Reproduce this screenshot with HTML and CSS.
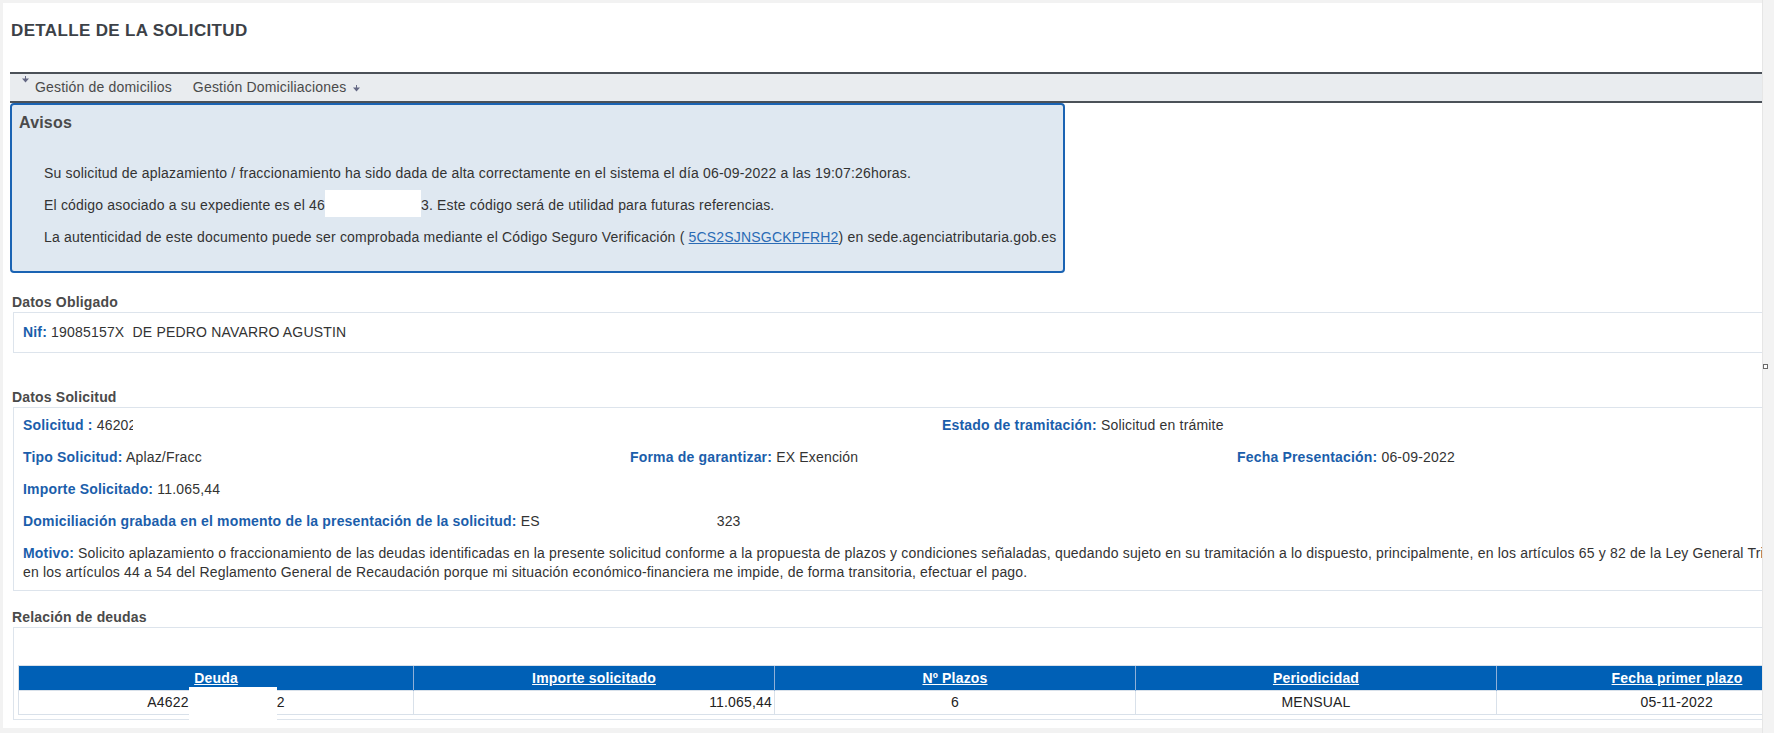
FILE: index.html
```html
<!DOCTYPE html>
<html lang="es">
  <head>
    <meta charset="UTF-8" />
    <meta name="viewport" content="width=device-width, initial-scale=1.0" />
    <title>Detalle de la solicitud</title>
    <link rel="stylesheet" href="styles.css">
  </head>
  <body>
    <div class="frame">
      <div class="viewport">
        <div class="page">
          <h1 class="page-title">DETALLE DE LA SOLICITUD</h1>

          <nav class="menu">
            <a class="menu-item">
              <svg class="menu-arrow menu-arrow--up" width="7" height="7" viewBox="0 0 7 7">
                <path d="M3 0h1v2.5H3z M0 2.5h7L3.5 6.5z" />
              </svg>
              Gestión de domicilios
            </a>
            <a class="menu-item">
              Gestión Domiciliaciones
              <svg class="menu-arrow menu-arrow--down" width="7" height="7" viewBox="0 0 7 7">
                <path d="M3 0h1v2.5H3z M0 2.5h7L3.5 6.5z" />
              </svg>
            </a>
          </nav>

          <div class="avisos">
            <h2>Avisos</h2>
            <div class="avisos-body">
              <p>Su solicitud de aplazamiento / fraccionamiento ha sido dada de alta correctamente en el sistema el día 06-09-2022 a las 19:07:26horas.</p>
              <p>El código asociado a su expediente es el 46<span class="redact"></span>3. Este código será de utilidad para futuras referencias.</p>
              <p>La autenticidad de este documento puede ser comprobada mediante el Código Seguro Verificación ( <a class="link" href="#">5CS2SJNSGCKPFRH2</a>) en sede.agenciatributaria.gob.es</p>
            </div>
          </div>

          <h3 class="section-title section-title--first">Datos Obligado</h3>
          <div class="panel">
            <span class="label">Nif:</span> 19085157X&nbsp; DE PEDRO NAVARRO AGUSTIN
          </div>

          <h3 class="section-title section-title--far">Datos Solicitud</h3>
          <div class="panel panel--solicitud">
            <div class="row">
              <div class="cell cell--half"><span class="label">Solicitud :</span> 4620<span class="cut">2</span></div>
              <div class="cell"><span class="label">Estado de tramitación:</span> Solicitud en trámite</div>
            </div>
            <div class="row">
              <div class="cell cell--third"><span class="label">Tipo Solicitud:</span> Aplaz/Fracc</div>
              <div class="cell cell--third"><span class="label">Forma de garantizar:</span> EX Exención</div>
              <div class="cell"><span class="label">Fecha Presentación:</span> 06-09-2022</div>
            </div>
            <div class="row">
              <div class="cell"><span class="label">Importe Solicitado:</span> 11.065,44</div>
            </div>
            <div class="row">
              <div class="cell"><span class="label">Domiciliación grabada en el momento de la presentación de la solicitud:</span> ES<span class="gap"></span>323</div>
            </div>
            <div class="row">
              <div class="cell"><span class="label">Motivo:</span> Solicito aplazamiento o fraccionamiento de las deudas identificadas en la presente solicitud conforme a la propuesta de plazos y condiciones señaladas, quedando sujeto en su tramitación a lo dispuesto, principalmente, en los artículos 65 y 82 de la Ley General Tributaria, y<br>en los artículos 44 a 54 del Reglamento General de Recaudación porque mi situación económico-financiera me impide, de forma transitoria, efectuar el pago.</div>
            </div>
          </div>

          <h3 class="section-title section-title--near">Relación de deudas</h3>
          <div class="panel panel--deudas">
            <table class="deudas">
              <thead>
                <tr>
                  <th class="col-deuda"><a href="#">Deuda</a></th>
                  <th><a href="#">Importe solicitado</a></th>
                  <th><a href="#">Nº Plazos</a></th>
                  <th><a href="#">Periodicidad</a></th>
                  <th><a href="#">Fecha primer plazo</a></th>
                </tr>
              </thead>
              <tbody>
                <tr>
                  <td>A4622<span class="redact-cell"></span>2</td>
                  <td class="num">11.065,44</td>
                  <td>6</td>
                  <td>MENSUAL</td>
                  <td>05-11-2022</td>
                </tr>
              </tbody>
            </table>
          </div>
        </div>
      </div>
      <div class="gutter"><span class="grip"></span></div>
    </div>
  </body>
</html>
```

FILE: styles.css
```css
body {
  margin: 0;
  height: 733px;
  overflow: hidden;
  background: #f2f2f2;
  font-family: "Liberation Sans", Arial, sans-serif;
  font-size: 14px;
  letter-spacing: 0.18px;
  color: #333;
}
.frame {
  display: flex;
  height: 733px;
  padding: 3px 0 0 3px;
  box-sizing: border-box;
}
.viewport {
  flex-shrink: 0;
  width: 1759px;
  height: 725px;
  overflow: hidden;
  background: #fff;
}
.page {
  width: 1900px;
  padding-left: 7px;
}
.gutter {
  flex: 1;
  margin-top: -3px;
  background: #f3f3f3;
  border-left: 1px solid #e6e6e6;
}
.grip {
  display: block;
  width: 3px;
  height: 3px;
  margin: 364px 0 0 0;
  border: 1px solid #6a6a6a;
  background: #fff;
}

.page-title {
  margin: 0;
  padding: 18px 0 31px 1px;
  font-size: 17px;
  line-height: 20px;
  font-weight: 700;
  letter-spacing: 0.35px;
  color: #3c4147;
}

.menu {
  display: flex;
  gap: 21px;
  height: 27px;
  padding-left: 12px;
  border-top: 2px solid #4b5158;
  border-bottom: 2px solid #4b5158;
  background: #e9ecef;
  line-height: 27px;
}
.menu-item {
  display: flex;
  gap: 6px;
  color: #4a4a4a;
  text-decoration: none;
}
.menu-arrow {
  fill: #646884;
  flex-shrink: 0;
}
.menu-arrow--up {
  margin-top: 2px;
}
.menu-arrow--down {
  margin-top: 11px;
  margin-left: 1px;
}

.avisos {
  width: 1055px;
  box-sizing: border-box;
  padding: 8px 7px 18px;
  border: 2px solid #1a63b3;
  border-radius: 4px;
  background: #dfe8f1;
}
.avisos h2 {
  margin: 0;
  font-size: 16px;
  line-height: 20px;
  color: #4a4a4a;
}
.avisos-body {
  margin-top: 24px;
  padding-left: 25px;
}
.avisos-body p {
  margin: 0;
  line-height: 32px;
  white-space: nowrap;
}
.redact {
  display: inline-block;
  width: 96px;
  height: 27px;
  vertical-align: -7px;
  background: #fff;
}
.link {
  color: #2a6bb5;
}

.section-title {
  margin: 21px 0 1px 2px;
  font-size: 14px;
  line-height: 17px;
  color: #4a4a4a;
}
.section-title--far {
  margin-top: 36px;
}
.section-title--near {
  margin-top: 18px;
}

.panel {
  margin-left: 3px;
  padding: 10px 9px;
  border: 1px solid #dde4ec;
  line-height: 19px;
}
.label {
  font-weight: 700;
  color: #1b5eab;
}

.panel--solicitud {
  padding: 8px 9px;
}
.row {
  display: flex;
}
.row + .row {
  margin-top: 13px;
}
.cell--half {
  width: 919px;
}
.cell--third {
  width: 607px;
}
.cut {
  display: inline-block;
  width: 4px;
  overflow: hidden;
  vertical-align: top;
}
.gap {
  display: inline-block;
  width: 177px;
}

.panel--deudas {
  padding: 37px 4px 4px;
}
.deudas {
  border-collapse: collapse;
  table-layout: fixed;
  width: 1834px;
}
.deudas th {
  width: 360px;
  height: 24px;
  padding: 0;
  background: #0060b6;
  border-left: 1px solid #8fb0d8;
  border-top: 1px solid #d9e1ea;
  text-align: center;
}
.deudas th.col-deuda {
  width: 394px;
  border-left: 1px solid #d9e1ea;
}
.deudas th a {
  color: #fff;
  font-weight: 700;
}
.deudas td {
  height: 23px;
  padding: 0 2px;
  border: 1px solid #d9e1ea;
  text-align: center;
  color: #222;
}
.deudas td.num {
  text-align: right;
}
.redact-cell {
  position: relative;
  display: inline-block;
  width: 88px;
  height: 14px;
}
.redact-cell::after {
  content: "";
  position: absolute;
  left: 0;
  right: 0;
  top: -6px;
  bottom: -13px;
  background: #fff;
}
```
